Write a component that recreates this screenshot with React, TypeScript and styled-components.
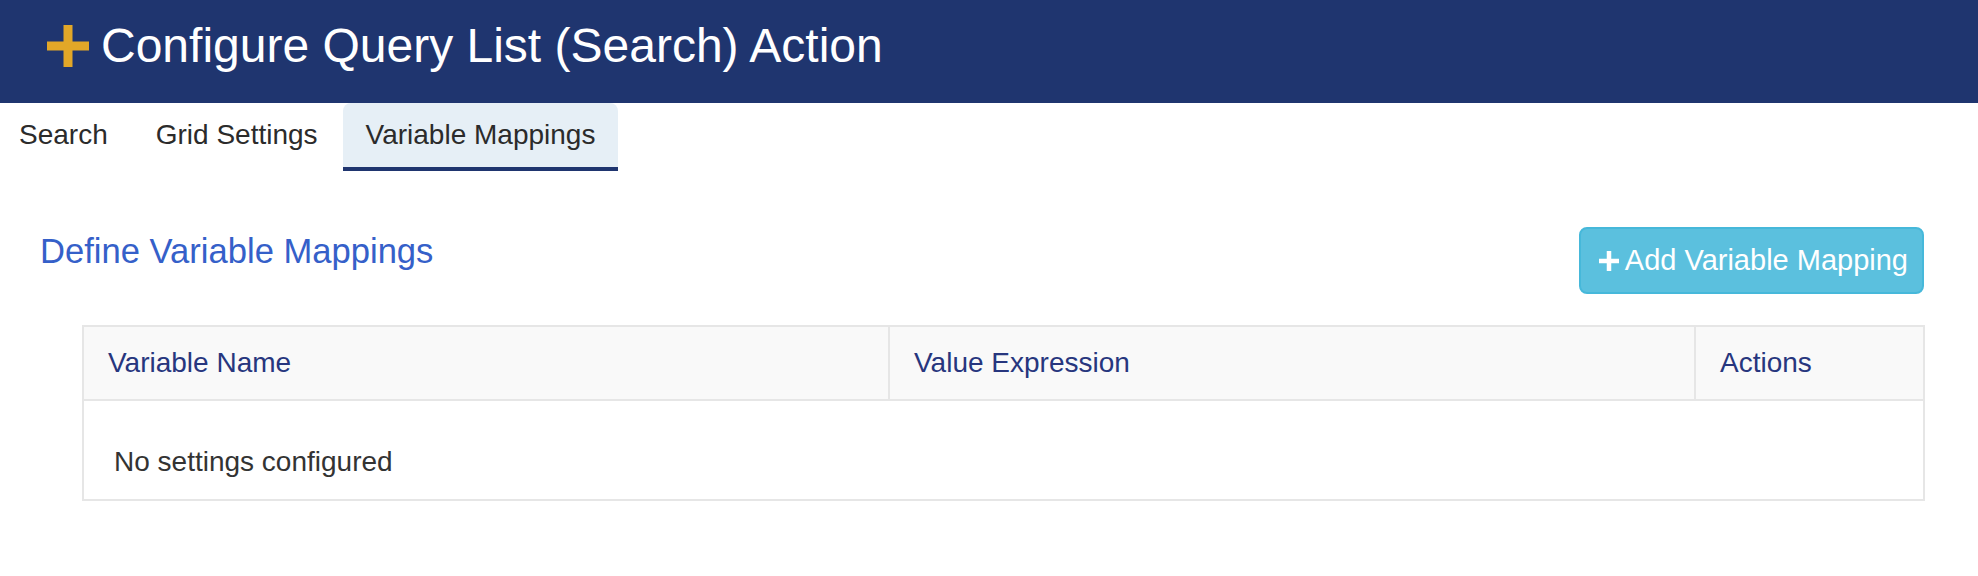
import React from "react";
import styled, { createGlobalStyle } from "styled-components";

const GlobalStyle = createGlobalStyle`
  html, body {
    margin: 0;
    padding: 0;
    background: #ffffff;
    font-family: "Liberation Sans", Arial, Helvetica, sans-serif;
    color: #333333;
  }
  * { box-sizing: border-box; }
`;

const Header = styled.header`
  height: 103px;
  background: #1f356f;
  display: flex;
  align-items: flex-start;
  padding: 20px 0 0 47px;
`;

const TitleRow = styled.div`
  display: flex;
  align-items: center;
  gap: 12px;
`;

const Title = styled.h1`
  margin: 0;
  font-size: 48px;
  line-height: 1.1;
  font-weight: 400;
  color: #ffffff;
`;

const Tabs = styled.nav`
  display: flex;
  margin-left: -4px;
  height: 68px;
`;

const Tab = styled.div<{ $active?: boolean }>`
  display: flex;
  align-items: center;
  padding: 0 23px;
  margin-right: 2px;
  font-size: 28px;
  color: #2b2b2b;
  border-radius: 8px 8px 0 0;
  background: ${(p) => (p.$active ? "#e6eff6" : "transparent")};
  border-bottom: 4px solid ${(p) => (p.$active ? "#1f356f" : "transparent")};
  cursor: pointer;
`;

const Section = styled.section`
  padding: 56px 53px 0 40px;
`;

const SectionHead = styled.div`
  display: flex;
  justify-content: space-between;
  align-items: flex-start;
`;

const Heading = styled.h2`
  margin: 5px 0 0;
  font-size: 34.6px;
  line-height: 1.1;
  font-weight: 400;
  color: #3560c9;
`;

const AddButton = styled.button`
  height: 67px;
  display: flex;
  align-items: center;
  gap: 6px;
  padding: 0 14px 0 18px;
  margin-right: 1px;
  background: #5bc0de;
  border: 2px solid #46b8da;
  border-radius: 8px;
  color: #ffffff;
  font-family: "Liberation Sans", Arial, Helvetica, sans-serif;
  font-size: 29px;
  cursor: pointer;
`;

const Table = styled.table`
  margin: 31px 0 0 42px;
  width: calc(100% - 42px);
  border-collapse: collapse;
  table-layout: fixed;
  border: 2px solid #e6e6e6;
`;

const HeadCell = styled.th`
  text-align: left;
  font-weight: 400;
  font-size: 28px;
  line-height: 40px;
  color: #27367e;
  background: #f9f9f9;
  padding: 16px 24px;
  border: 2px solid #e6e6e6;
`;

const BodyCell = styled.td`
  font-size: 28px;
  line-height: 40px;
  color: #333333;
  padding: 41px 30px 17px;
  border: 2px solid #e6e6e6;
`;

const PlusIcon = ({ size, bar, color }: { size: number; bar: number; color: string }) => (
  <svg width={size} height={size} viewBox={`0 0 ${size} ${size}`} aria-hidden="true">
    <rect x={(size - bar) / 2} y={0} width={bar} height={size} fill={color} />
    <rect x={0} y={(size - bar) / 2} width={size} height={bar} fill={color} />
  </svg>
);

export default function App() {
  return (
    <>
      <GlobalStyle />
      <Header>
        <TitleRow>
          <PlusIcon size={42} bar={9} color="#e2a728" />
          <Title>Configure Query List (Search) Action</Title>
        </TitleRow>
      </Header>
      <Tabs>
        <Tab>Search</Tab>
        <Tab>Grid Settings</Tab>
        <Tab $active>Variable Mappings</Tab>
      </Tabs>
      <Section>
        <SectionHead>
          <Heading>Define Variable Mappings</Heading>
          <AddButton type="button">
            <PlusIcon size={20} bar={4.5} color="#ffffff" />
            Add Variable Mapping
          </AddButton>
        </SectionHead>
        <Table>
          <colgroup>
            <col style={{ width: "806px" }} />
            <col style={{ width: "806px" }} />
            <col />
          </colgroup>
          <thead>
            <tr>
              <HeadCell>Variable Name</HeadCell>
              <HeadCell>Value Expression</HeadCell>
              <HeadCell>Actions</HeadCell>
            </tr>
          </thead>
          <tbody>
            <tr>
              <BodyCell colSpan={3}>No settings configured</BodyCell>
            </tr>
          </tbody>
        </Table>
      </Section>
    </>
  );
}
